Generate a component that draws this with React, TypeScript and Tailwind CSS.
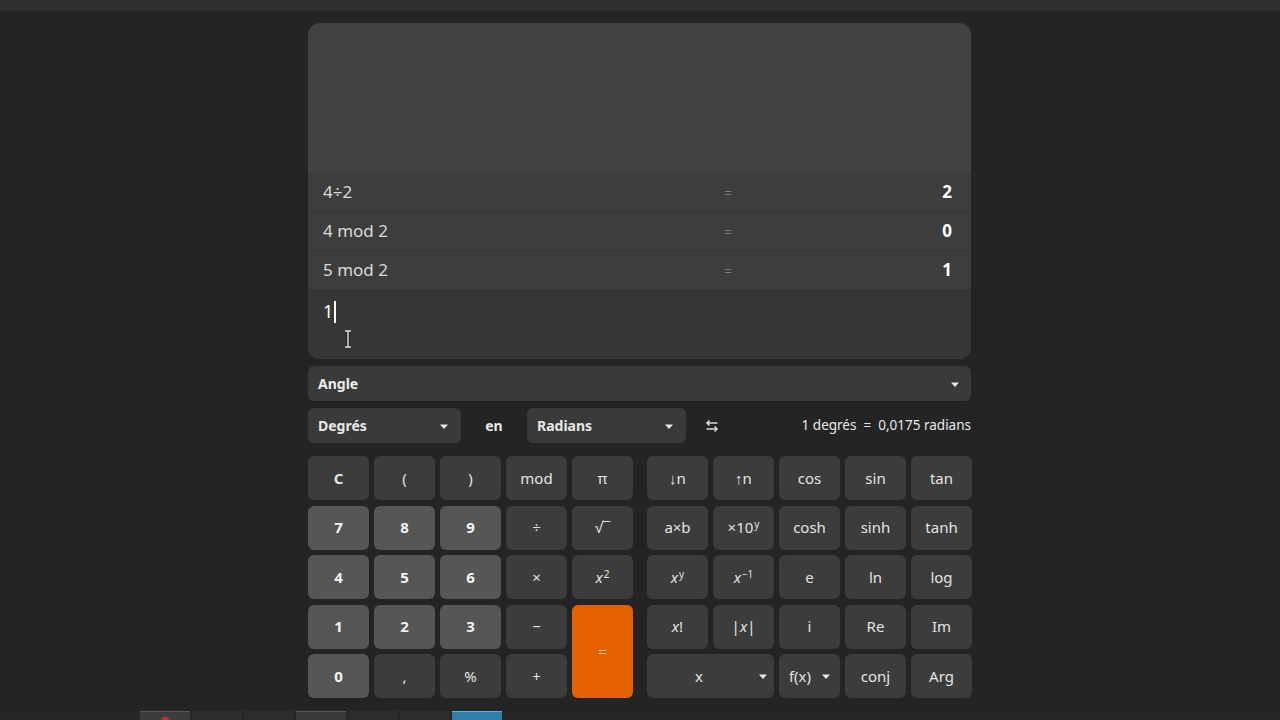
import { ReactNode } from "react";

const history = [
  { expr: "4÷2", result: "2" },
  { expr: "4 mod 2", result: "0" },
  { expr: "5 mod 2", result: "1" },
];

function Caret() {
  return (
    <svg width="8" height="10" viewBox="0 0 8 10" className="ml-[3px] mt-[2px] fill-[#e8e8e8]">
      <path d="M0 2.5 L4 7 L8 2.5 Z" />
    </svg>
  );
}

function Key({
  children,
  tone = "fn",
  className = "",
}: {
  children: ReactNode;
  tone?: "fn" | "num" | "eq";
  className?: string;
}) {
  const bg =
    tone === "num"
      ? "bg-[#565656] font-bold text-[#f2f2f2]"
      : tone === "eq"
        ? "bg-[#e56100] text-[#f6c9a8]"
        : "bg-[#3c3c3c] text-[#e4e4e4]";
  return (
    <div className={`flex items-center justify-center rounded-[6px] text-[15px] ${bg} ${className}`}>
      {children}
    </div>
  );
}

function Sup({ base, exp }: { base: ReactNode; exp: string }) {
  return (
    <span>
      {base}
      <sup className="text-[10px] ml-[1px]">{exp}</sup>
    </span>
  );
}

export default function App() {
  return (
    <div
      className="w-[1280px] h-[720px] bg-[#242424] flex flex-col overflow-hidden relative"
      style={{ fontFamily: '"Noto Sans", "Open Sans", sans-serif' }}
    >
      {/* window header strip */}
      <div className="h-[11px] bg-[#303030] border-b border-[#2a2a2a] shrink-0" />

      <div className="flex-1 flex justify-center pt-[12px]">
        <div className="w-[664px] flex flex-col">
          {/* display: history + input */}
          <div className="h-[336px] w-[663px] rounded-[12px] bg-[#424242] overflow-hidden flex flex-col justify-end">
            {history.map((h) => (
              <div
                key={h.expr}
                className="h-[39px] bg-[#3d3d3d] border-b border-[#363636] flex items-center px-[15px] text-[17px]"
              >
                <span className="w-[401px] text-[#dadada]">{h.expr}</span>
                <span className="text-[#7a7a7a] text-[14px]">=</span>
                <span className="flex-1 text-right text-white font-bold pr-[4px]">{h.result}</span>
              </div>
            ))}
            <div className="h-[69px] bg-[#363636] px-[15px] pt-[8px] relative">
              <div className="flex items-center text-[18px] text-white">
                <span>1</span>
                <span className="w-[2px] h-[22px] bg-white ml-[1px]" />
              </div>
              {/* mouse pointer (I-beam) */}
              <svg width="8" height="18" viewBox="0 0 8 18" className="absolute left-[36px] top-[40px]">
                <path d="M1 1 H7 M4 1 V17 M1 17 H7" stroke="#111" strokeWidth="3" />
                <path d="M1 1 H7 M4 1 V17 M1 17 H7" stroke="#e6e6e6" strokeWidth="1.5" />
              </svg>
            </div>
          </div>

          {/* conversion category */}
          <div className="mt-[7px] h-[35px] w-[663px] rounded-[6px] bg-[#3a3a3a] flex items-center justify-between pl-[10px] pr-[12px] text-[14px] font-bold text-[#ececec]">
            <span>Angle</span>
            <Caret />
          </div>

          {/* unit conversion row */}
          <div className="mt-[7px] h-[35px] flex items-center text-[14px] text-[#e8e8e8]">
            <div className="w-[153px] h-full rounded-[6px] bg-[#3a3a3a] flex items-center justify-between pl-[10px] pr-[13px] font-bold">
              <span>Degrés</span>
              <Caret />
            </div>
            <span className="w-[66px] text-center font-bold">en</span>
            <div className="w-[159px] h-full rounded-[6px] bg-[#3a3a3a] flex items-center justify-between pl-[10px] pr-[13px] font-bold">
              <span>Radians</span>
              <Caret />
            </div>
            <svg width="14" height="14" viewBox="0 0 14 14" className="ml-[19px]" fill="none" stroke="#d8d8d8" strokeWidth="1.6">
              <path d="M12.5 4 H2 M4.5 1.5 L2 4 L4.5 6.5" />
              <path d="M1.5 10 H12 M9.5 7.5 L12 10 L9.5 12.5" />
            </svg>
            <span className="flex-1 text-right text-[13.5px] pr-[1px]">1 degrés&nbsp; =&nbsp; 0,0175 radians</span>
          </div>

          {/* keypads */}
          <div className="mt-[13px] flex justify-between">
            <div className="grid grid-cols-[repeat(5,61px)] grid-rows-[repeat(5,44px)] gap-x-[5px] gap-y-[5.5px]">
              <Key className="font-bold">C</Key>
              <Key>(</Key>
              <Key>)</Key>
              <Key>mod</Key>
              <Key>π</Key>
              <Key tone="num">7</Key>
              <Key tone="num">8</Key>
              <Key tone="num">9</Key>
              <Key className="text-[#bdbdbd]">÷</Key>
              <Key>√‾</Key>
              <Key tone="num">4</Key>
              <Key tone="num">5</Key>
              <Key tone="num">6</Key>
              <Key className="text-[13px]">×</Key>
              <Key>
                <Sup base={<i>x</i>} exp="2" />
              </Key>
              <Key tone="num">1</Key>
              <Key tone="num">2</Key>
              <Key tone="num">3</Key>
              <Key>−</Key>
              <Key tone="eq" className="row-span-2 text-[14px]">=</Key>
              <Key tone="num">0</Key>
              <Key>,</Key>
              <Key>%</Key>
              <Key>+</Key>
            </div>

            <div className="grid grid-cols-[repeat(5,61px)] grid-rows-[repeat(5,44px)] gap-x-[5px] gap-y-[5.5px]">
              <Key>↓n</Key>
              <Key>↑n</Key>
              <Key>cos</Key>
              <Key>sin</Key>
              <Key>tan</Key>
              <Key className="text-[14px]">a×b</Key>
              <Key className="text-[14px]">
                <Sup base="×10" exp="y" />
              </Key>
              <Key>cosh</Key>
              <Key>sinh</Key>
              <Key>tanh</Key>
              <Key>
                <Sup base={<i>x</i>} exp="y" />
              </Key>
              <Key>
                <Sup base={<i>x</i>} exp="−1" />
              </Key>
              <Key>e</Key>
              <Key>ln</Key>
              <Key>log</Key>
              <Key>
                <i>x</i>!
              </Key>
              <Key>
                |<i>x</i>|
              </Key>
              <Key>i</Key>
              <Key>Re</Key>
              <Key>Im</Key>
              <Key className="col-span-2 !justify-between pl-[48px] pr-[7px]">
                <span>x</span>
                <Caret />
              </Key>
              <Key className="gap-[8px]">
                <span>f(x)</span>
                <Caret />
              </Key>
              <Key>conj</Key>
              <Key>Arg</Key>
            </div>
          </div>
        </div>
      </div>

      {/* taskbar */}
      <div className="h-[10px] bg-[#262626] shrink-0 flex items-end">
        <div className="w-[140px]" />
        <div className="flex gap-[2px] h-[9px]">
          <div className="w-[50px] bg-[#3c3c3c] border-t border-[#5a5a5a] flex justify-center">
            <div className="w-[8px] h-[3px] mt-[5px] rounded-t-full bg-[#c03030]" />
          </div>
          <div className="w-[50px] bg-[#2c2c2c]" />
          <div className="w-[50px] bg-[#2c2c2c]" />
          <div className="w-[50px] bg-[#3a3a3a] border-t border-[#5a5a5a]" />
          <div className="w-[50px] bg-[#2c2c2c]" />
          <div className="w-[50px] bg-[#2c2c2c]" />
          <div className="w-[50px] bg-[#2f7fa8] border-t border-[#5ab0d8]" />
        </div>
      </div>
    </div>
  );
}
